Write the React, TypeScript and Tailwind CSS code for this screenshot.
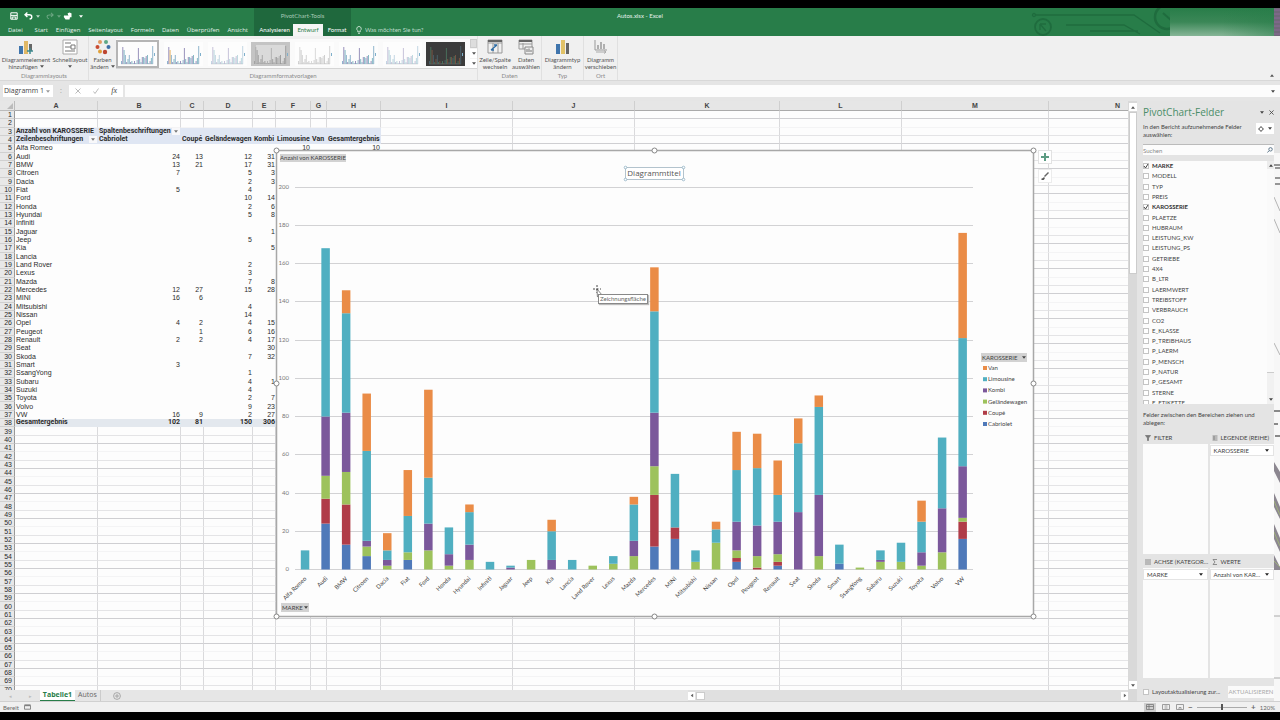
import React from "react";

type Row = [string, number, number, number, number, number, number];

const DATA: Row[] = [
  ["Alfa Romeo", 0, 0, 0, 0, 10, 0],
  ["Audi", 24, 13, 12, 31, 88, 0],
  ["BMW", 13, 21, 17, 31, 52, 12],
  ["Citroen", 7, 0, 5, 3, 47, 30],
  ["Dacia", 0, 0, 2, 3, 5, 9],
  ["Fiat", 5, 0, 4, 0, 19, 24],
  ["Ford", 0, 0, 10, 14, 24, 46],
  ["Honda", 0, 0, 2, 6, 14, 0],
  ["Hyundai", 0, 0, 5, 8, 17, 4],
  ["Infiniti", 0, 0, 0, 0, 4, 0],
  ["Jaguar", 0, 0, 0, 1, 1, 0],
  ["Jeep", 0, 0, 5, 0, 0, 0],
  ["Kia", 0, 0, 0, 5, 15, 6],
  ["Lancia", 0, 0, 0, 0, 5, 0],
  ["Land Rover", 0, 0, 2, 0, 0, 0],
  ["Lexus", 0, 0, 3, 0, 4, 0],
  ["Mazda", 0, 0, 7, 8, 19, 4],
  ["Mercedes", 12, 27, 15, 28, 53, 23],
  ["MINI", 16, 6, 0, 0, 28, 0],
  ["Mitsubishi", 0, 0, 4, 0, 6, 0],
  ["Nissan", 0, 0, 14, 0, 7, 4],
  ["Opel", 4, 2, 4, 15, 27, 20],
  ["Peugeot", 0, 1, 6, 16, 30, 18],
  ["Renault", 2, 2, 4, 17, 14, 18],
  ["Seat", 0, 0, 0, 30, 36, 13],
  ["Skoda", 0, 0, 7, 32, 46, 6],
  ["Smart", 3, 0, 0, 0, 10, 0],
  ["SsangYong", 0, 0, 1, 0, 0, 0],
  ["Subaru", 0, 0, 4, 1, 5, 0],
  ["Suzuki", 0, 0, 4, 0, 10, 0],
  ["Toyota", 0, 0, 2, 7, 16, 11],
  ["Volvo", 0, 0, 9, 23, 37, 0],
  ["VW", 16, 9, 2, 27, 67, 55],
];

const COLORS = ["#4f79b9", "#b03c48", "#9dc25c", "#7b589b", "#50afc1", "#ea8c47"];
const COLS = "ABCDEFGHIJKLMN".split("");
const COL_WIDTHS = [
  "w-[83px]", "w-[83px]", "w-[23px]", "w-[49px]", "w-[23px]", "w-[35px]", "w-[16px]",
  "w-[54px]", "w-[132px]", "w-[122px]", "w-[145px]", "w-[122px]", "w-[147px]", "w-[138px]",
];

function cellText(row: number, col: number): string {
  if (row === 3) return ["Anzahl von KAROSSERIE", "Spaltenbeschriftungen"][col] ?? "";
  if (row === 4)
    return ["Zeilenbeschriftungen", "Cabriolet", "Coupé", "Geländewagen", "Kombi", "Limousine", "Van", "Gesamtergebnis"][col] ?? "";
  if (row >= 5 && row <= 37) {
    const d = DATA[row - 5];
    if (col < 7) return d[col] ? String(d[col]) : "";
    if (col === 7) return String(d[1] + d[2] + d[3] + d[4] + d[5] + d[6]);
  }
  if (row === 38) return ["Gesamtergebnis", "102", "81", "150", "306"][col] ?? "";
  return "";
}

function Arrow({ className = "" }: { className?: string }) {
  return (
    <svg viewBox="0 0 6 4" className={"h-[3px] w-[4px] shrink-0 " + className} fill="currentColor">
      <path d="M0 0h6L3 4z" />
    </svg>
  );
}

function FilterButton({ label }: { label: string }) {
  return (
    <button aria-label={label} className="flex h-[7px] w-[8px] shrink-0 items-center justify-center bg-[#f8f8fa] text-[#777]">
      <Arrow />
    </button>
  );
}

/* ---------- Title bar and tabs ---------- */

function QuickAccess() {
  return (
    <div className="flex h-4 items-center gap-[10px] pl-[10px] text-white">
      <button aria-label="Speichern">
        <svg viewBox="0 0 8 8" className="h-2 w-2" fill="none" stroke="currentColor" strokeWidth="1">
          <path d="M.8.8h6.400v6.400H.8zM2.200 7.200V5h3.600v2.200M.8 3.400h6.400" />
        </svg>
      </button>
      <button aria-label="Rückgängig" className="-ml-1 flex items-center gap-[3px]">
        <svg viewBox="0 0 9 8" className="h-2 w-[9px]" fill="none" stroke="currentColor" strokeWidth="1.400">
          <path d="M3.400.6L1 2.800l2.400 2.200M1 2.800h4.200c2 0 2.600 1 2.600 2.100S7 6.800 5.600 7" />
        </svg>
        <Arrow className="opacity-70" />
      </button>
      <button aria-label="Wiederholen" className="-ml-1 flex items-center gap-[3px] opacity-30">
        <svg viewBox="0 0 9 8" className="h-2 w-[8px]" fill="none" stroke="currentColor" strokeWidth="1.200">
          <path d="M5.600.6L8 2.800 5.600 5M8 2.800H3.800C1.800 2.800 1.200 3.800 1.200 4.900S2 6.800 3.400 7" />
        </svg>
        <Arrow />
      </button>
      <button aria-label="Touchmodus" className="-ml-2">
        <svg viewBox="0 0 10 8" className="h-2 w-[10px]" fill="currentColor">
          <path d="M4.500 1.200h4v4h-2zM1 3.500h4.500l1.500 1.500-.5 2.500h-4L.8 5z" />
          <circle cx="6.500" cy="2" r="1.600" />
        </svg>
      </button>
      <button aria-label="Symbolleiste anpassen" className="-ml-1">
        <Arrow />
      </button>
    </div>
  );
}

function Header() {
  return (
    <header className="flex h-7 shrink-0 bg-[#287d49] text-[6px] leading-3 text-[#e4f1e9]">
      <div className="flex w-[254px] shrink-0 flex-col">
        <QuickAccess />
        <nav className="flex h-3 justify-between pl-2 pr-[6px] font-['Open_Sans',sans-serif]">
          {["Datei", "Start", "Einfügen", "Seitenlayout", "Formeln", "Daten", "Überprüfen", "Ansicht"].map((t) => (
            <a key={t} href="#" className={t === "Datei" ? "mr-1" : ""}>{t}</a>
          ))}
        </nav>
      </div>
      <div className="flex w-[97px] shrink-0 flex-col bg-[#1f683d]">
        <div className="h-4 pt-[2px] text-center text-[#a9cbb7]">PivotChart-Tools</div>
        <nav className="flex h-3 items-stretch pl-[2px] text-white">
          <a href="#" className="w-[37px] text-center">Analysieren</a>
          <a href="#" className="w-[30px] bg-[#f5f5f5] text-center text-[#287d49]">Entwurf</a>
          <a href="#" className="w-[28px] text-center">Format</a>
        </nav>
      </div>
      <div className="flex flex-1 flex-col">
        <div className="h-4 pl-[266px] pt-[2px]">Autos.xlsx - Excel</div>
        <label className="flex h-3 items-center gap-[3px] pl-[5px]">
          <svg viewBox="0 0 6 8" className="h-2 w-[6px]" fill="none" stroke="currentColor" strokeWidth=".8">
            <path d="M3 .5a2.200 2.200 0 0 1 1.300 4v1.300H1.700V4.500A2.200 2.200 0 0 1 3 .5zM2 7.300h2" />
          </svg>
          <input placeholder="Was möchten Sie tun?" aria-label="Was möchten Sie tun?" className="w-20 placeholder:text-[#bfdcca]" />
        </label>
      </div>
      <svg viewBox="0 0 250 28" className="h-7 w-[250px] shrink-0" fill="none">
        <defs>
          <linearGradient id="fade" x1="0" y1="0" x2="0" y2="1">
            <stop offset="0" stopColor="#287d49" />
            <stop offset=".5" stopColor="#3b8757" />
            <stop offset="1" stopColor="#86b596" />
          </linearGradient>
          <linearGradient id="fadeRight" x1="0" y1="0" x2="1" y2="0">
            <stop offset=".5" stopColor="#287d49" stopOpacity="0" />
            <stop offset="1" stopColor="#287d49" stopOpacity=".5" />
          </linearGradient>
        </defs>
        <g stroke="#1f6c3e" strokeWidth="1.300">
          <circle cx="4" cy="7" r="1.500" />
          <path d="M6 7h98l26 18M36 17h58l16 9M60 23h48M10 16h6M10 16v6M10 16l6 7" />
          <circle cx="13" cy="19" r="8" strokeWidth="1.800" />
          <circle cx="137" cy="9" r="12" strokeWidth="2.500" />
          <path d="M133 5l9 8" strokeWidth="2" />
        </g>
        <path d="M140 0h104v28H140z" fill="url(#fade)" />
        <path d="M140 0h104v28H140z" fill="url(#fadeRight)" />
        <path d="M244 0h6v28h-6z" fill="#71677a" />
        <path d="M244 2h6M244 6h6M244 10h6M244 14h6M244 18h6M244 22h6M244 26h6" stroke="#8b6a97" />
      </svg>
    </header>
  );
}

/* ---------- Ribbon ---------- */

const THUMB_BARS = [3, 17, 14, 9, 2, 5, 9, 2, 3, 1, 3, 1, 4, 16, 5, 2, 7, 7, 6, 8, 9, 1, 3, 6, 18];

function Thumb({ i }: { i: number }) {
  const dark = i === 7;
  const grey = i === 3;
  const pale = i === 4 || i === 2 || i === 6;
  const bg = dark ? "#3b3b3b" : grey ? "#c4c4c4" : "#fdfdfd";
  const tones = dark
    ? ["#4d6a76", "#4f7f65", "#8a5a44"]
    : grey || i === 4
    ? ["#9a9a9a", "#a8a8a8", "#8d8d8d"]
    : ["#6f9fc0", "#7a72a8", "#62a7b5"];
  return (
    <svg viewBox="0 0 39 24" className="h-6 w-[39px]">
      <path d="M0 0h39v24H0z" fill={bg} />
      {grey && <path d="M5 3h29v18H5z" fill="#dadada" />}
      <path d="M3 22h32" stroke={dark ? "#777" : "#ccc"} strokeWidth=".5" />
      {THUMB_BARS.map((h, k) => (
        <path
          key={k}
          d={`M${3.5 + k * 1.3} 22v${-h}`}
          stroke={i === 1 && k === 2 ? "#e6a23c" : tones[k % 3]}
          strokeWidth=".9"
          opacity={pale ? 0.45 : 0.85}
        />
      ))}
      <path d="M36.500 11v3" stroke="#7fb0cc" strokeWidth="1" />
    </svg>
  );
}

function RibbonButton({ lines, arrow, className, children }: { lines: [string, string]; arrow?: boolean; className: string; children: React.ReactNode }) {
  return (
    <button className={"flex flex-col items-center whitespace-nowrap leading-[7px] " + className}>
      <svg viewBox="0 0 16 16" className="mb-px h-4 w-4" fill="none">{children}</svg>
      <span>{lines[0]}</span>
      <span className="flex h-[7px] items-center gap-[2px]">
        {lines[1]}
        {arrow && <Arrow />}
      </span>
    </button>
  );
}

function Group({ label, className, children }: { label: string; className: string; children: React.ReactNode }) {
  return (
    <section className={"flex shrink-0 flex-col border-r border-[#e0e0e0] pt-[3px] " + className}>
      <div className="flex h-[33px] justify-center">{children}</div>
      <div className="text-center leading-[7px] text-[#8a8a8a]">{label}</div>
    </section>
  );
}

function Ribbon() {
  return (
    <div className="flex h-[44px] shrink-0 bg-[#f0f0f0] text-[6px] text-[#555]">
      <Group label="Diagrammlayouts" className="w-[89px]">
        <RibbonButton lines={["Diagrammelement", "hinzufügen"]} arrow className="w-[52px]">
          <path d="M1 7h4v8H1z" fill="#3f75ad" />
          <path d="M6 2h4v13H6z" fill="#e0b866" />
          <path d="M11 5h3v7h-3z" fill="#666" />
          <path d="M12 9v6M9 12h6" stroke="#3f8a8f" strokeWidth="1.500" />
        </RibbonButton>
        <RibbonButton lines={["Schnelllayout", ""]} arrow className="w-[36px]">
          <path d="M1 1h14v14H1z" fill="#fff" stroke="#aaa" />
          <path d="M3 4h6M3 8h6M3 12h10M9 6h4v4H9z" stroke="#777" />
        </RibbonButton>
      </Group>
      <Group label="Diagrammformatvorlagen" className="w-[389px]">
        <RibbonButton lines={["Farben", "ändern"]} arrow className="w-[27px]">
          <circle cx="5" cy="3" r="2" fill="#e39a62" />
          <circle cx="11" cy="3" r="2" fill="#5ea887" />
          <circle cx="2.500" cy="8" r="2" fill="#c94c32" />
          <circle cx="13.500" cy="8" r="2" fill="#3d6fa8" />
          <circle cx="5" cy="12.500" r="2" fill="#e0a03a" />
          <circle cx="10" cy="13" r="2.200" fill="#bd4530" />
        </RibbonButton>
        <div className="flex h-[30px] flex-1 items-center justify-between border-b border-[#d5d5d5] bg-[#fafafa]">
          {[0, 1, 2, 3, 4, 5, 6, 7].map((i) => (
            <button key={i} aria-label={`Formatvorlage ${i + 1}`} className={i === 0 ? "border-2 border-[#b5b5b5]" : ""}>
              <Thumb i={i} />
            </button>
          ))}
          <div className="flex h-full w-[7px] flex-col justify-between bg-[#f4f4f4]">
            <button aria-label="Nach oben" className="flex h-[9px] items-center justify-center border border-[#ccc] bg-[#ddd]" />
            <button aria-label="Nach unten" className="flex h-[9px] items-center justify-center bg-white"><Arrow /></button>
            <button aria-label="Mehr" className="flex h-[9px] items-center justify-center bg-white"><Arrow /></button>
          </div>
        </div>
      </Group>
      <Group label="Daten" className="w-[64px]">
        <RibbonButton lines={["Zeile/Spalte", "wechseln"]} className="w-[33px]">
          <path d="M1 1h14v13H1zM1 4h14M6 4v10M11 4v10" stroke="#999" />
          <path d="M1 1h14v2H1z" fill="#666" />
          <path d="M4 11l6-5M10 6H7M4 11h3" stroke="#2f6da5" strokeWidth="1.300" />
        </RibbonButton>
        <RibbonButton lines={["Daten", "auswählen"]} className="w-[29px]">
          <path d="M1 1h13v9H1zM1 5h13M5 4v6" stroke="#999" />
          <path d="M1 1h13v2H1z" fill="#666" />
          <path d="M7 8h8v7H7z" fill="#eee" stroke="#888" />
          <path d="M9 13v-3M11 13V9.500M13 13v-2" stroke="#777" />
        </RibbonButton>
      </Group>
      <Group label="Typ" className="w-[42px]">
        <RibbonButton lines={["Diagrammtyp", "ändern"]} className="w-[38px]">
          <path d="M1 5h4v10H1z" fill="#3f75ad" />
          <path d="M6 1h4v14H6z" fill="#e2c267" />
          <path d="M11 4h3v11h-3z" fill="#666" />
        </RibbonButton>
      </Group>
      <Group label="Ort" className="w-[34px]">
        <RibbonButton lines={["Diagramm", "verschieben"]} className="w-[33px]">
          <path d="M2 1v10h12" stroke="#999" />
          <path d="M5 10V6M8 10V3M11 10V5" stroke="#999" strokeWidth="1.500" />
          <path d="M3 13h10M11 11.500l2 1.500-2 1.500" stroke="#aaa" />
        </RibbonButton>
      </Group>
      <div className="flex flex-1 items-end justify-end pb-[3px] pr-[6px]">
        <button aria-label="Menüband reduzieren" className="rotate-180"><Arrow /></button>
      </div>
    </div>
  );
}

function FormulaBar() {
  return (
    <div className="flex h-[21px] shrink-0 border-t border-[#d8d8d8] bg-[#e5e5e5] pb-1 pl-[3px] pt-1 font-['Open_Sans',sans-serif] text-[7px] text-[#444]">
      <button className="flex w-[50px] items-center justify-between bg-white pl-px pr-[3px]">
        Diagramm 1 <Arrow className="text-[#999]" />
      </button>
      <span className="w-4 text-center leading-3 text-[#999]">:</span>
      <div className="flex w-[54px] items-center justify-around bg-white">
        <button aria-label="Abbrechen">
          <svg viewBox="0 0 6 6" className="h-[6px] w-[6px]" stroke="#bbb"><path d="M.5.500l5 5M5.500.500l-5 5" /></svg>
        </button>
        <button aria-label="Eingeben">
          <svg viewBox="0 0 6 6" className="h-[6px] w-[6px]" stroke="#bbb" fill="none"><path d="M.5 3.500l1.500 2L5.500.500" /></svg>
        </button>
        <button className="font-['Liberation_Serif',serif] text-[8px] italic leading-3">fx</button>
      </div>
      <label className="ml-[2px] flex flex-1 items-center justify-end bg-[#fcfcfc] pr-[5px]">
        <input aria-label="Bearbeitungsleiste" className="h-full w-full" />
        <Arrow />
      </label>
    </div>
  );
}

/* ---------- Worksheet ---------- */

const LINE = ["border-b-[#e4e4e6]", "border-b-[#cfcfd2]", "border-b-[#f4f4f5]"];

function Sheet() {
  const rows = Array.from({ length: 70 }, (_, i) => i + 1);
  return (
    <table className="h-[594px] w-[1187px] table-fixed border-separate border-spacing-0 whitespace-nowrap bg-[#fdfdfd] font-['Liberation_Sans',sans-serif] text-[7px] leading-[7px] text-[#2b2b2b]">
      <colgroup>
        <col className="w-[15px]" />
        {COL_WIDTHS.map((w, i) => <col key={i} className={w} />)}
      </colgroup>
      <thead>
        <tr className="h-[10px] bg-[#e6e6e6] text-[#444]">
          <th className="border-b border-r border-[#bbb] p-0">
            <svg viewBox="0 0 6 6" className="ml-auto mr-px h-[6px] w-[6px]" fill="#bbb"><path d="M6 0v6H0z" /></svg>
          </th>
          {COLS.map((c) => <th key={c} scope="col" className="border-b border-r border-b-[#aaa] border-r-[#cfcfcf] p-0 font-bold">{c}</th>)}
        </tr>
      </thead>
      <tbody>
        {rows.map((r) => (
          <tr key={r}>
            <th scope="row" className="border-b border-r border-b-[#d0d0d0] border-r-[#999] bg-[#e8e8e8] p-0 pr-[2px] text-right font-normal">{r}</th>
            {COLS.map((c, i) => {
              const head = (r === 3 || r === 4) && i < 8;
              const total = r === 38 && i < 8;
              const body = r > 4 && r < 38 && i < 8;
              const right = r > 4 && i > 0;
              const look = head
                ? "bg-[#dfe6f3] border-[#dfe6f3] font-['Roboto',sans-serif] font-bold"
                : total
                ? "bg-[#e3e8ee] border-[#e3e8ee] font-['Roboto',sans-serif] font-bold"
                : body
                ? "border-transparent"
                : "border-r-[#dadadc] " + LINE[r % 3];
              const dd = (r === 3 && i === 1) || (r === 4 && i === 0);
              return (
                <td key={c} className={"border-b border-r p-0 pl-px " + look + (right ? " text-right" : "")}>
                  {dd ? (
                    <span className="flex h-[7px] items-center justify-between">
                      {cellText(r, i)}
                      <FilterButton label={cellText(r, i) + " filtern"} />
                    </span>
                  ) : (
                    cellText(r, i)
                  )}
                </td>
              );
            })}
          </tr>
        ))}
      </tbody>
    </table>
  );
}

/* ---------- Chart ---------- */

const BASE = 420;
const UNIT = 1.9125;
const STEP = 20.55;

function Chart() {
  const handles = [[0, 0], [378, 0], [757, 0], [0, 233], [757, 233], [0, 466], [378, 466], [757, 466]];
  const legend = ["Van", "Limousine", "Kombi", "Geländewagen", "Coupé", "Cabriolet"];
  return (
    <figure className="absolute left-[276px] top-[49px] h-[467px] w-[758px] bg-[#fdfdfd] font-['Lato',sans-serif]">
      <svg viewBox="0 0 758 467" className="absolute inset-0 h-full w-full overflow-visible">
        <path d="M.5.500h757v466H.5z" fill="none" stroke="#a8a8a8" strokeWidth="1.500" />
        {Array.from({ length: 11 }, (_, i) => i * 20).map((v) => {
          const y = BASE - v * UNIT;
          return (
            <g key={v}>
              <path d={`M19 ${Math.round(y) - 0.5}H697`} stroke="#d2d2d4" />
              <text x="13" y={Math.round(y) + 1} fontSize="6" fill="#777" textAnchor="end">{v}</text>
            </g>
          );
        })}
        {DATA.map((d, k) => {
          const x = 29 + k * STEP;
          let acc = 0;
          return (
            <g key={d[0]}>
              {COLORS.map((color, s) => {
                const v = d[s + 1] as number;
                if (!v) return null;
                acc += v;
                return <rect key={s} x={x - 4.2} y={BASE - 0.5 - acc * UNIT} width="8.500" height={v * UNIT} fill={color} />;
              })}
            </g>
          );
        })}
        <g fontSize="6" fill="#444" textAnchor="end" textRendering="geometricPrecision">
          {DATA.map((d, k) => (
            <g key={d[0]} transform={`translate(${Math.round(29 + k * STEP) + 2} ${BASE + 9}) rotate(-45)`}>
              <text x="0" y="0">{d[0]}</text>
            </g>
          ))}
        </g>
        <g fill="#fff" stroke="#8eb0c2" strokeWidth=".8">
          <path d="M349.500 17.500h58v12h-58z" stroke="#9fb4c0" />
          {[[349.5, 17.5], [407.5, 17.5], [349.5, 29.5], [407.5, 29.5]].map(([x, y]) => <circle key={x + "-" + y} cx={x} cy={y} r="1.300" />)}
        </g>
        <text x="378" y="26" fontSize="8" fill="#555" textAnchor="middle" className="font-['Open_Sans',sans-serif]">Diagrammtitel</text>
        {legend.map((name, i) => (
          <g key={name}>
            <rect x="707" y={216 + i * 11.2} width="4" height="4" fill={COLORS[5 - i]} />
            <text x="712" y={220 + Math.round(i * 11.2)} fontSize="6" fill="#444">{name}</text>
          </g>
        ))}
        {handles.map(([x, y]) => <circle key={x + "/" + y} cx={x + 0.5} cy={y + 0.5} r="2.500" fill="#fff" stroke="#888" />)}
        <g stroke="#333" strokeWidth=".9" fill="#fff">
          <path d="M321 135v8M317 139h8" strokeDasharray="2 1.500" />
          <path d="M321 139l5 6-2 .3 1 2.500-1 .4-1-2.500-1.600 1z" strokeWidth=".6" />
        </g>
      </svg>
      <button className="absolute left-[4px] top-[4px] h-[8px] whitespace-nowrap bg-[#d2d2d2] text-[6px] leading-[8px] text-[#444]">Anzahl von KAROSSERIE</button>
      <button className="absolute left-[5px] top-[453px] flex h-[9px] w-[28px] items-center justify-between bg-[#d2d2d2] px-px text-[6px] text-[#444]">MARKE <Arrow /></button>
      <button className="absolute left-[705px] top-[203px] flex h-[9px] w-[46px] items-center justify-between bg-[#d2d2d2] px-px text-[6px] text-[#444]">KAROSSERIE <Arrow /></button>
      <div role="tooltip" className="absolute left-[322px] top-[144px] h-[10px] w-[50px] whitespace-nowrap border border-[#888] bg-white text-center text-[6px] leading-[8px] text-[#666] shadow-[1px_1px_1px_#bbb]">Zeichnungsfläche</div>
      <button aria-label="Diagrammelemente" className="absolute left-[762px] top-0 flex h-[14px] w-[14px] items-center justify-center border border-[#e2e2e2] bg-white">
        <svg viewBox="0 0 8 8" className="h-2 w-2" stroke="#5d9c83" strokeWidth="2"><path d="M4 0v8M0 4h8" /></svg>
      </button>
      <button aria-label="Diagrammformatvorlagen" className="absolute left-[762px] top-[19px] flex h-[14px] w-[14px] items-center justify-center border border-[#ececec] bg-white">
        <svg viewBox="0 0 8 8" className="h-2 w-2" fill="none" stroke="#666"><path d="M7.500.500l-4 4" strokeWidth="1.400" /><path d="M.5 7.500c1.500 0 2.500-.5 2.500-2" stroke="#555" strokeWidth="1.800" /></svg>
      </button>
    </figure>
  );
}

function SheetTabs() {
  return (
    <div className="flex h-[11px] shrink-0 items-stretch bg-[#e6e6e6] font-['Open_Sans',sans-serif] text-[7px] leading-[10px] text-[#666]">
      <div className="flex w-10 items-center justify-around text-[5px] text-[#bbb]"><span>◂</span><span>▸</span></div>
      <a href="#" className="w-[35px] border-b border-[#287d49] bg-white text-center font-bold text-[#287d49]">Tabelle1</a>
      <a href="#" className="w-[26px] border-r border-[#ccc] text-center">Autos</a>
      <button aria-label="Neues Blatt" className="ml-3">
        <svg viewBox="0 0 8 8" className="h-2 w-2" fill="none" stroke="#999" strokeWidth=".8"><circle cx="4" cy="4" r="3.400" /><path d="M4 2v4M2 4h4" /></svg>
      </button>
      <div className="ml-auto flex w-[440px] items-center bg-[#e0e0e0]">
        <button aria-label="Nach links" className="flex h-2 w-[7px] items-center justify-center bg-white"><Arrow className="rotate-90" /></button>
        <div className="ml-px h-2 w-[9px] border border-[#ccc] bg-white" />
        <button aria-label="Nach rechts" className="ml-auto flex h-2 w-[7px] items-center justify-center bg-white"><Arrow className="-rotate-90" /></button>
      </div>
    </div>
  );
}

function VerticalScroll() {
  return (
    <div className="flex w-[9px] shrink-0 flex-col items-center bg-[#d9d9d9] py-[2px]">
      <button aria-label="Nach oben" className="flex h-[8px] w-[8px] items-center justify-center bg-white text-[#555]"><Arrow className="rotate-180" /></button>
      <div className="mt-px h-[162px] w-[8px] border border-[#ccc] bg-white" />
      <button aria-label="Nach unten" className="mb-[10px] mt-auto flex h-[8px] w-[8px] items-center justify-center bg-white text-[#555]"><Arrow /></button>
    </div>
  );
}

/* ---------- Field pane ---------- */

const FIELDS = [
  "MARKE", "MODELL", "TYP", "PREIS", "KAROSSERIE", "PLAETZE", "HUBRAUM", "LEISTUNG_KW", "LEISTUNG_PS", "GETRIEBE", "4X4", "B_LTR",
  "LAERMWERT", "TREIBSTOFF", "VERBRAUCH", "CO2", "E_KLASSE", "P_TREIBHAUS", "P_LAERM", "P_MENSCH", "P_NATUR", "P_GESAMT", "STERNE", "E_ETIKETTE",
];

const BOX = "h-[6px] w-[6px] shrink-0 appearance-none border border-[#c4c4c4] bg-white";

function Area({ icon, title, field }: { icon: React.ReactNode; title: string; field?: string }) {
  return (
    <section className="flex min-w-0 flex-1 flex-col">
      <h3 className="flex h-3 items-center gap-[3px] whitespace-nowrap pl-[2px]">
        <svg viewBox="0 0 6 6" className="h-[6px] w-[6px] shrink-0" fill="none" stroke="#777" strokeWidth=".8">{icon}</svg>
        <span>{title}</span>
      </h3>
      <div className="h-[110px] bg-[#fcfcfc] pt-px">
        {field && (
          <button className="flex h-[11px] w-full items-center justify-between border border-[#e4e4e4] bg-white pl-[3px] pr-1">
            <span>{field}</span>
            <Arrow className="text-[#222]" />
          </button>
        )}
      </div>
    </section>
  );
}

function FieldPane() {
  return (
    <aside className="flex w-[137px] shrink-0 flex-col bg-[#e4e4e4] pl-[6px] text-[6px] leading-[8px] text-[#444]">
      <div className="flex h-[22px] items-center justify-between">
        <h2 className="font-['Open_Sans',sans-serif] text-[10px] text-[#4b8d68]">PivotChart-Felder</h2>
        <span className="flex items-center gap-[5px]"><Arrow />
          <button aria-label="Schließen"><svg viewBox="0 0 6 6" className="h-[5px] w-[5px]" stroke="#444"><path d="M.5.500l5 5M5.500.500l-5 5" /></svg></button>
        </span>
      </div>
      <div className="flex h-[21px] items-start justify-between">
        <p className="w-[108px]">In den Bericht aufzunehmende Felder auswählen:</p>
        <button aria-label="Extras" className="flex h-[11px] w-[18px] items-center justify-around bg-white">
          <svg viewBox="0 0 6 6" className="h-[6px] w-[6px]" fill="none" stroke="#777"><circle cx="3" cy="3" r="1.800" /><path d="M3 0v1M3 5v1M0 3h1M5 3h1" /></svg>
          <Arrow />
        </button>
      </div>
      <label className="flex h-[11px] items-center border-t border-[#bbb] bg-[#fcfcfc] pr-px">
        <input placeholder="Suchen" aria-label="Suchen" className="h-full w-full placeholder:text-[#888]" />
        <svg viewBox="0 0 6 6" className="h-[6px] w-[6px]" fill="none" stroke="#5a7488"><circle cx="3.700" cy="2.300" r="1.800" /><path d="M2.300 3.700L.3 5.700" /></svg>
      </label>
      <div className="mt-[6px] flex h-[243px] overflow-hidden bg-[#fcfcfc]">
        <ul className="grid h-[247px] flex-1 auto-rows-fr">
          {FIELDS.map((f) => {
            const on = f === "MARKE" || f === "KAROSSERIE";
            return (
              <li key={f} className="flex items-center">
                <label className={"flex items-center gap-[3px] " + (on ? "font-bold text-[#333]" : "")}>
                  <span className="relative flex">
                    <input type="checkbox" defaultChecked={on} className={BOX} />
                    {on && <svg viewBox="0 0 6 6" className="pointer-events-none absolute inset-0 h-[6px] w-[6px]" fill="none" stroke="#444"><path d="M1 3l1.500 2L5 1" /></svg>}
                  </span>
                  {f}
                </label>
              </li>
            );
          })}
        </ul>
        <div className="flex w-[7px] flex-col justify-between bg-[#fafafa]">
          <div className="flex h-[8px] items-center justify-center bg-[#ececec]"><Arrow className="rotate-180" /></div>
          <div className="flex h-[32px] items-end justify-center border-t border-[#ccc] bg-[#f1f1f1] pb-[3px]"><Arrow /></div>
        </div>
      </div>
      <p className="mb-[5px] mt-[7px] w-[122px]">Felder zwischen den Bereichen ziehen und ablegen:</p>
      <div className="flex gap-[2px]">
        <Area title="FILTER" icon={<path d="M.5.500h5L3.500 3v2.500h-1V3z" fill="#777" />} />
        <Area title="LEGENDE (REIHE)" field="KAROSSERIE" icon={<path d="M.5 1h5M.5 3h5M.5 5h5M2 1v4" />} />
      </div>
      <div className="mt-[2px] flex gap-[2px]">
        <Area title="ACHSE (KATEGOR..." field="MARKE" icon={<path d="M0 1h6M0 3h6M0 5h6" />} />
        <Area title="WERTE" field="Anzahl von KAR..." icon={<path d="M5 .5H1L3 3 1 5.500h4" />} />
      </div>
      <div className="mt-[8px] flex items-center justify-between">
        <label className="flex items-center gap-[3px] whitespace-nowrap">
          <input type="checkbox" className={BOX} />
          <span>Layoutaktualisierung zur...</span>
        </label>
        <button disabled className="h-[12px] w-[46px] shrink-0 bg-[#fafafa] text-center text-[#aaa]">AKTUALISIEREN</button>
      </div>
    </aside>
  );
}

function EdgeStrip() {
  return (
    <svg viewBox="0 0 6 600" preserveAspectRatio="none" className="h-full w-[6px] shrink-0 bg-[#f7f7f7]">
      <path d="M0 0h6v52H0z" fill="#e4e4e4" />
      <path d="M0 64h6M1 67h5M1 77h5M1 83h5" stroke="#777" strokeWidth="1.500" />
      <path d="M0 96l6 14M0 118l6 14M0 242l6 12" stroke="#b5b5b5" />
      <path d="M0 310h6M0 323h4M1 335h5" stroke="#666" strokeWidth="1.500" />
      <g fill="#8c8790"><path d="M0 361l6 10v11l-6-12zM0 392l6 14v12l-6-12zM0 423l6 14v14l-6-13zM0 454l6 12v3H0z" /></g>
      <path d="M0 400l6 14M0 431l6 14M0 460l6 6" stroke="#9fb07c" />
      <path d="M0 515h6M0 577h6" stroke="#aaa" />
    </svg>
  );
}

function StatusBar() {
  return (
    <footer className="flex h-[11px] shrink-0 items-center border-t border-[#d0d0d0] bg-[#f0f0f0] pl-[3px] pr-[5px] text-[6px] text-[#666]">
      <span>Bereit</span>
      <svg viewBox="0 0 8 6" className="ml-[5px] h-[6px] w-[7px]" fill="none" stroke="#777"><path d="M.5 1.500h7v4h-7z" /><path d="M.5.800h7" strokeWidth="1.500" /></svg>
      <div className="ml-auto flex items-center gap-1">
        <button aria-label="Normal" className="flex h-[9px] w-[12px] items-center justify-center bg-[#cfcfcf]"><svg viewBox="0 0 8 6" className="h-[6px] w-2" fill="none" stroke="#777" strokeWidth=".8"><path d="M.5.500h7v5h-7zM.5 2.500h7M3 .5v5" /></svg></button>
        <button aria-label="Seitenlayout" className="flex h-[9px] w-[12px] items-center justify-center"><svg viewBox="0 0 8 6" className="h-[6px] w-2" fill="none" stroke="#888" strokeWidth=".8"><path d="M.5.500h7v5h-7zM2.500 2h3M2.500 4h3" /></svg></button>
        <button aria-label="Umbruchvorschau" className="flex h-[9px] w-[8px] items-center justify-center"><svg viewBox="0 0 8 6" className="h-[6px] w-2" fill="none" stroke="#888" strokeWidth=".8"><path d="M.5.500h7v5h-7zM3 5.500v-2h2v2" /></svg></button>
        <button className="w-[5px] text-[8px] font-bold leading-[8px]">−</button>
        <input
          type="range"
          aria-label="Zoom"
          className="h-[8px] w-[50px] appearance-none bg-[linear-gradient(#aaa,#aaa)] bg-[length:100%_1px] bg-center bg-no-repeat [&::-webkit-slider-thumb]:h-[6px] [&::-webkit-slider-thumb]:w-[2px] [&::-webkit-slider-thumb]:appearance-none [&::-webkit-slider-thumb]:bg-[#555]"
        />
        <button className="w-[5px] text-[8px] font-bold leading-[8px]">+</button>
        <span>120%</span>
      </div>
    </footer>
  );
}

export default function App() {
  return (
    <div className="flex h-screen flex-col overflow-hidden bg-black py-2 font-['Lato','Noto_Sans',sans-serif]">
      <Header />
      <Ribbon />
      <FormulaBar />
      <main className="flex min-h-0 flex-1">
        <div className="flex min-w-0 flex-1 flex-col">
          <div className="relative min-h-0 flex-1 overflow-hidden">
            <Sheet />
            <Chart />
          </div>
          <SheetTabs />
        </div>
        <VerticalScroll />
        <FieldPane />
        <EdgeStrip />
      </main>
      <StatusBar />
    </div>
  );
}
